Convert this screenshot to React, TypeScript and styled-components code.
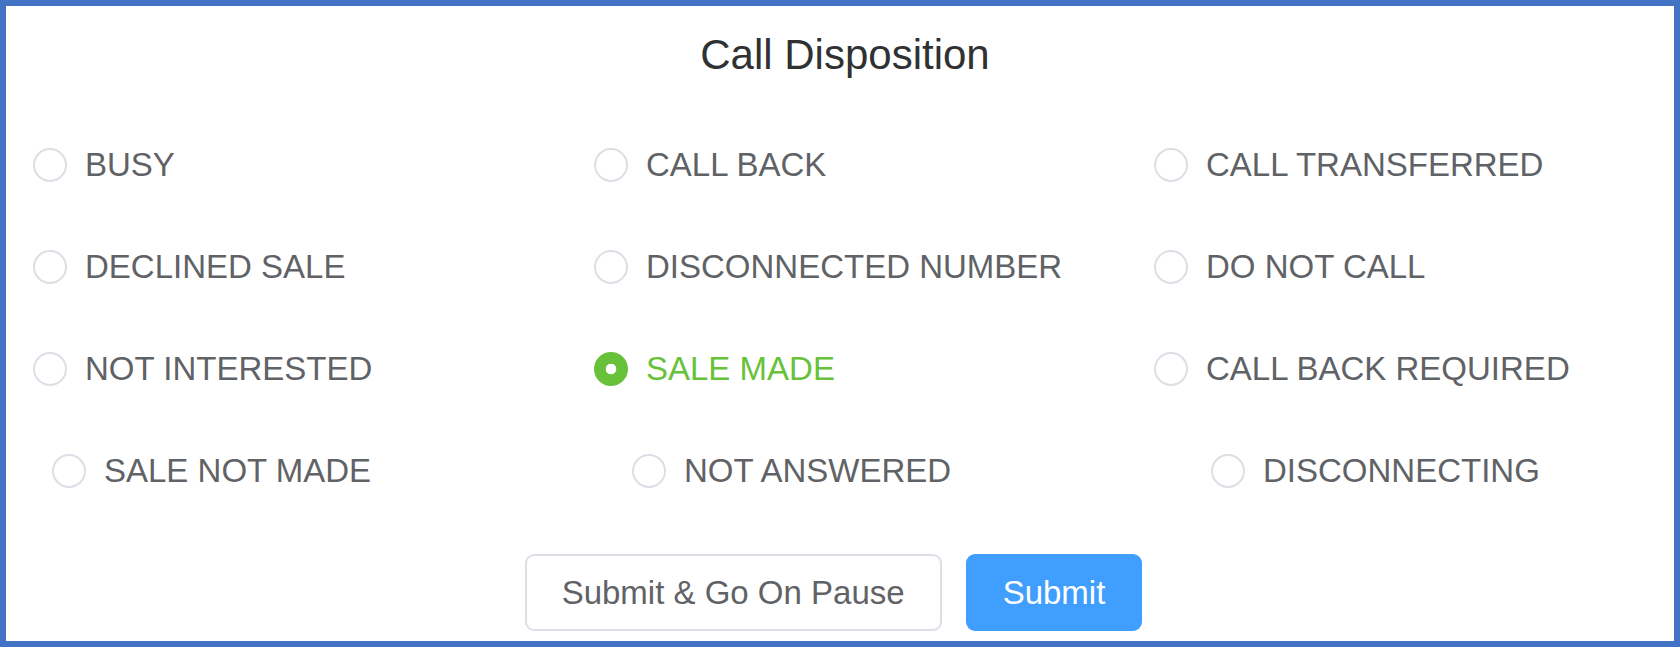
import React, { useState } from "react";
import styled, { createGlobalStyle } from "styled-components";

const GlobalStyle = createGlobalStyle`
  html, body {
    margin: 0;
    padding: 0;
    background: #fff;
  }
  body {
    font-family: "Liberation Sans", Arial, Helvetica, sans-serif;
  }
`;

const StFrame = styled.main`
  box-sizing: border-box;
  width: 100%;
  height: 647px;
  border: 6px solid #4472c4;
  background: #fff;
  display: flex;
  flex-direction: column;
`;

const StTitle = styled.h2`
  margin: 25px 0 35px;
  padding-left: 10px;
  font-size: 42px;
  line-height: 48px;
  font-weight: 400;
  color: #303133;
  text-align: center;
`;

const StGrid = styled.div<{ $offset: number; $cols: string }>`
  display: grid;
  grid-template-columns: ${(p) => p.$cols};
  grid-auto-rows: 102px;
  padding-left: ${(p) => p.$offset}px;
`;

const StOption = styled.label<{ $checked: boolean }>`
  display: flex;
  align-items: center;
  gap: 18px;
  cursor: pointer;
  font-size: 33px;
  line-height: 38px;
  white-space: nowrap;
  color: ${(p) => (p.$checked ? "#67c23a" : "#606266")};
`;

const StRadio = styled.input`
  appearance: none;
  box-sizing: border-box;
  flex: none;
  width: 34px;
  height: 34px;
  margin: 0;
  border-radius: 50%;
  border: 2px solid #dcdfe6;
  background: #fff;
  cursor: pointer;

  &:checked {
    border-color: #67c23a;
    background: radial-gradient(circle, #fff 0 5px, #67c23a 5.6px);
  }
`;

const StActions = styled.div`
  display: flex;
  justify-content: center;
  gap: 24px;
  margin-top: 32px;
  padding-right: 13px;
`;

const StButton = styled.button<{ $primary?: boolean }>`
  box-sizing: border-box;
  height: 77px;
  padding: 0 35px;
  border-radius: 9px;
  border: 2px solid ${(p) => (p.$primary ? "#409eff" : "#dcdfe6")};
  background: ${(p) => (p.$primary ? "#409eff" : "#fff")};
  color: ${(p) => (p.$primary ? "#fff" : "#606266")};
  font-family: "Liberation Sans", Arial, Helvetica, sans-serif;
  font-size: 33px;
  cursor: pointer;
`;

const mainRows = [
  "BUSY",
  "CALL BACK",
  "CALL TRANSFERRED",
  "DECLINED SALE",
  "DISCONNECTED NUMBER",
  "DO NOT CALL",
  "NOT INTERESTED",
  "SALE MADE",
  "CALL BACK REQUIRED",
];

const lastRow = ["SALE NOT MADE", "NOT ANSWERED", "DISCONNECTING"];

function App() {
  const [selected, setSelected] = useState("SALE MADE");

  const renderOption = (name: string) => (
    <StOption key={name} $checked={selected === name}>
      <StRadio
        type="radio"
        name="disposition"
        value={name}
        checked={selected === name}
        onChange={() => setSelected(name)}
      />
      <span>{name}</span>
    </StOption>
  );

  return (
    <>
      <GlobalStyle />
      <StFrame>
        <StTitle>Call Disposition</StTitle>
        <StGrid $offset={27} $cols="561px 560px 1fr">
          {mainRows.map(renderOption)}
        </StGrid>
        <StGrid $offset={46} $cols="580px 579px 1fr">
          {lastRow.map(renderOption)}
        </StGrid>
        <StActions>
          <StButton type="button">Submit &amp; Go On Pause</StButton>
          <StButton type="button" $primary>
            Submit
          </StButton>
        </StActions>
      </StFrame>
    </>
  );
}

export default App;
